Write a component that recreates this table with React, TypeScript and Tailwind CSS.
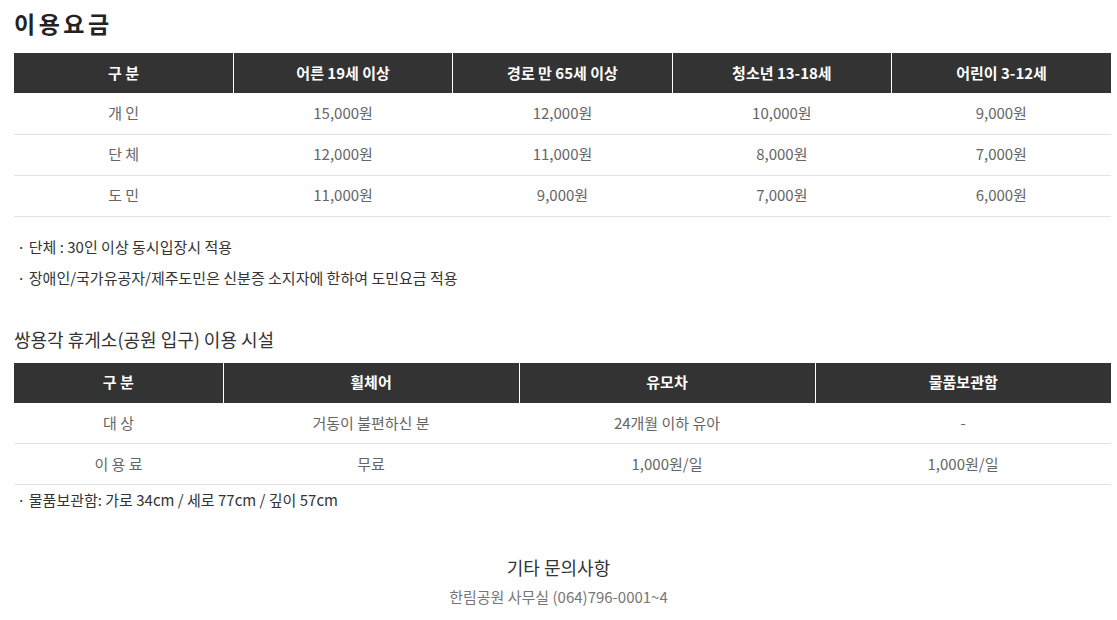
import React from "react";

const font = { fontFamily: '"Noto Sans CJK KR", "Noto Sans", sans-serif' };

const head1 = ["구 분", "어른 19세 이상", "경로 만 65세 이상", "청소년 13-18세", "어린이 3-12세"];
const rows1 = [
  ["개 인", "15,000원", "12,000원", "10,000원", "9,000원"],
  ["단 체", "12,000원", "11,000원", "8,000원", "7,000원"],
  ["도 민", "11,000원", "9,000원", "7,000원", "6,000원"],
];
const head2 = ["구 분", "휠체어", "유모차", "물품보관함"];
const rows2 = [
  ["대 상", "거동이 불편하신 분", "24개월 이하 유아", "-"],
  ["이 용 료", "무료", "1,000원/일", "1,000원/일"],
];

export default function App() {
  return (
    <div className="w-[1117px] h-[620px] bg-white overflow-hidden px-[14px] pt-[6px] text-[#333]" style={font}>
      <h1 className="text-[23px] font-bold tracking-[3.5px] leading-[34px] text-[#222]">이용요금</h1>
      <table className="w-[1097px] mt-[13px] border-collapse table-fixed">
        <thead>
          <tr className="bg-[#333] text-white">
            {head1.map((h, i) => (
              <th key={i} className={`h-[40px] text-[15px] font-bold p-0 ${i > 0 ? "border-l border-white" : ""}`}>{h}</th>
            ))}
          </tr>
        </thead>
        <tbody>
          {rows1.map((r, i) => (
            <tr key={i} className="border-b border-[#e2e2e2]">
              {r.map((c, j) => (
                <td key={j} className="h-[41px] text-center text-[15px] text-[#666] p-0">{c}</td>
              ))}
            </tr>
          ))}
        </tbody>
      </table>
      <div className="mt-[14px] text-[15px] leading-[31px] text-[#333] pl-[3px]">
        <p>· 단체 : 30인 이상 동시입장시 적용</p>
        <p>· 장애인/국가유공자/제주도민은 신분증 소지자에 한하여 도민요금 적용</p>
      </div>
      <h2 className="mt-[34px] text-[18px] leading-[24px] text-[#333]">쌍용각 휴게소(공원 입구) 이용 시설</h2>
      <table className="w-[1097px] mt-[12px] border-collapse table-fixed">
        <colgroup>
          <col className="w-[209px]" />
          <col className="w-[296px]" />
          <col className="w-[296px]" />
          <col className="w-[296px]" />
        </colgroup>
        <thead>
          <tr className="bg-[#333] text-white">
            {head2.map((h, i) => (
              <th key={i} className={`h-[40px] text-[15px] font-bold p-0 ${i > 0 ? "border-l border-white" : ""}`}>{h}</th>
            ))}
          </tr>
        </thead>
        <tbody>
          {rows2.map((r, i) => (
            <tr key={i} className="border-b border-[#e2e2e2]">
              {r.map((c, j) => (
                <td key={j} className="h-[41px] text-center text-[15px] text-[#666] p-0">{c}</td>
              ))}
            </tr>
          ))}
        </tbody>
      </table>
      <p className="mt-[3px] text-[15px] leading-[24px] text-[#333] pl-[3px]">· 물품보관함: 가로 34cm / 세로 77cm / 깊이 57cm</p>
      <div className="mt-[42px] text-center">
        <p className="text-[18px] leading-[26px] text-[#333]">기타 문의사항</p>
        <p className="mt-[6px] text-[15px] leading-[22px] text-[#777]">한림공원 사무실 (064)796-0001~4</p>
      </div>
    </div>
  );
}
